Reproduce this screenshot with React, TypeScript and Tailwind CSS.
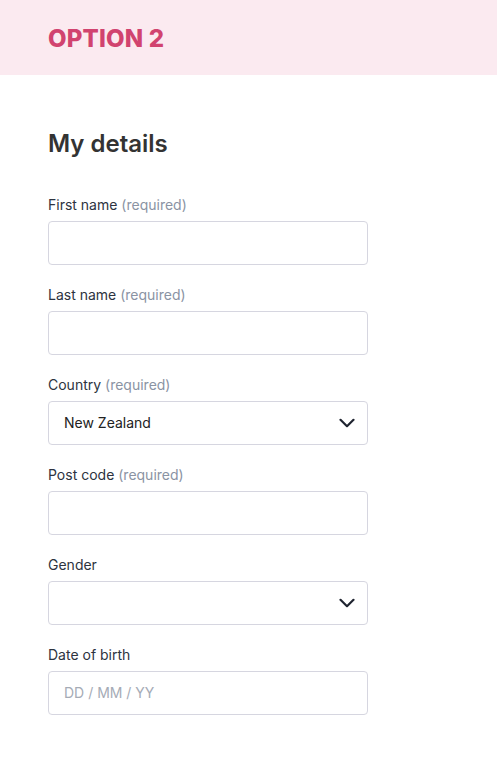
const fields = [
  { label: "First name", required: true, kind: "text" },
  { label: "Last name", required: true, kind: "text" },
  { label: "Country", required: true, kind: "select", value: "New Zealand" },
  { label: "Post code", required: true, kind: "text" },
  { label: "Gender", required: false, kind: "select", value: "" },
  { label: "Date of birth", required: false, kind: "text", placeholder: "DD / MM / YY" },
];

function Chevron() {
  return (
    <svg width="16" height="10" viewBox="0 0 16 10" fill="none" className="shrink-0">
      <path d="M1.5 1.8 8 8.2l6.5-6.4" stroke="#1f2430" strokeWidth="2.2" strokeLinecap="round" strokeLinejoin="round" />
    </svg>
  );
}

export default function App() {
  return (
    <div className="min-h-[771px] bg-white font-['Inter',sans-serif]">
      <header className="h-[75px] bg-[#fbeaf0] px-12 flex items-center">
        <h1 className="text-[24px] font-extrabold tracking-[0.2px] text-[#d1436f] leading-none pt-[2px]">
          OPTION 2
        </h1>
      </header>
      <main className="px-12 pt-[55px]">
        <h2 className="text-[24px] font-semibold text-[#333333] leading-7 mb-[37px]">
          My details
        </h2>
        <div className="flex flex-col gap-5 w-[320px]">
          {fields.map((f) => (
            <div key={f.label} className="flex flex-col gap-[6px]">
              <label className="text-sm leading-5 text-[#2d3340]">
                {f.label}
                {f.required && <span className="text-[#8a93a3]"> (required)</span>}
              </label>
              <div className="h-[44px] rounded border border-[#d6d6e0] flex items-center justify-between pl-[15px] pr-3">
                <span className="text-sm text-[#222]">
                  {f.value ?? ""}
                  {f.placeholder && <span className="text-[#a5abb6]">{f.placeholder}</span>}
                </span>
                {f.kind === "select" && <Chevron />}
              </div>
            </div>
          ))}
        </div>
      </main>
    </div>
  );
}
